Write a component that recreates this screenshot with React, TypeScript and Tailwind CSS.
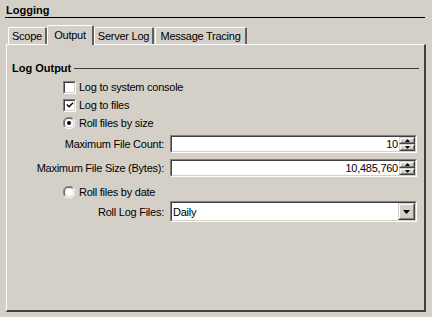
import React from "react";

const Sunken = ({ className, children }: { className?: string; children?: React.ReactNode }) => (
  <div className={`border border-t-[#808080] border-l-[#808080] border-r-white border-b-white ${className ?? ""}`}>
    <div className="flex h-full items-center border border-t-[#404040] border-l-[#404040] border-r-[#d4d0c8] border-b-[#d4d0c8] bg-white">
      {children}
    </div>
  </div>
);

const Raised = ({ className, children }: { className?: string; children?: React.ReactNode }) => (
  <div className={`border border-t-[#d4d0c8] border-l-[#d4d0c8] border-r-[#404040] border-b-[#404040] ${className ?? ""}`}>
    <div className="flex h-full items-center justify-center border border-t-white border-l-white border-r-[#808080] border-b-[#808080] bg-[#d4d0c8]">
      {children}
    </div>
  </div>
);

const Checkbox = ({ checked }: { checked?: boolean }) => (
  <Sunken className="h-[13px] w-[13px]">
    {checked && (
      <svg width="9" height="9" viewBox="0 0 9 9" className="ml-px">
        <path d="M1 3.5 L3.5 6 L8 1.5" stroke="#000" strokeWidth="1.6" fill="none" />
      </svg>
    )}
  </Sunken>
);

const Radio = ({ checked }: { checked?: boolean }) => (
  <svg width="12" height="12" viewBox="0 0 12 12">
    <circle cx="6" cy="6" r="5.5" fill="white" />
    <path d="M1.8 10.2 A5.5 5.5 0 0 1 10.2 1.8" stroke="#808080" strokeWidth="1" fill="none" />
    <path d="M2.6 9.4 A4.5 4.5 0 0 1 9.4 2.6" stroke="#404040" strokeWidth="1" fill="none" />
    <path d="M10.2 1.8 A5.5 5.5 0 0 1 1.8 10.2" stroke="#ffffff" strokeWidth="1" fill="none" />
    <path d="M9.4 2.6 A4.5 4.5 0 0 1 2.6 9.4" stroke="#d4d0c8" strokeWidth="1" fill="none" />
    {checked && <circle cx="6" cy="6" r="2" fill="#000" />}
  </svg>
);

const Spinner = () => (
  <div className="flex h-full w-[16px] flex-col">
    <Raised className="h-1/2">
      <svg width="5" height="3" viewBox="0 0 5 3">
        <path d="M2.5 0 L5 3 L0 3 Z" fill="#000" />
      </svg>
    </Raised>
    <Raised className="h-1/2">
      <svg width="5" height="3" viewBox="0 0 5 3">
        <path d="M0 0 L5 0 L2.5 3 Z" fill="#000" />
      </svg>
    </Raised>
  </div>
);

const Tab = ({ label, width, selected }: { label: string; width: string; selected?: boolean }) => (
  <div
    className={`${width} ${
      selected ? "relative z-10 -mb-px h-[20px] pt-[2px]" : "h-[17px] pt-[1px]"
    } flex justify-center rounded-tl-[2px] rounded-tr-[2px] border-t border-l border-r-2 border-t-white border-l-white border-r-[#606060] bg-[#d4d0c8]`}
  >
    <span className="leading-[14px]">{label}</span>
  </div>
);

const NumberField = ({ value }: { value: string }) => (
  <Sunken className="h-[18px] w-[247px]">
    <span className="flex-1 pr-px text-right leading-[14px]">{value}</span>
    <Spinner />
  </Sunken>
);

const FieldRow = ({ label, children }: { label: string; children: React.ReactNode }) => (
  <div className="flex items-center">
    <span className="w-[157px] text-right">{label}</span>
    <div className="ml-[6px]">{children}</div>
  </div>
);

export default function App() {
  return (
    <div className="h-[317px] w-[432px] overflow-hidden bg-[#d4d0c8] text-[11px] leading-[14px] tracking-[-0.25px] text-black [font-family:'Liberation_Sans',Arial,sans-serif]">
      {/* title */}
      <div className="mr-[7px] ml-[5px] border-b border-black pt-[3px] pl-px font-bold tracking-normal">Logging</div>

      {/* tabs */}
      <div className="mt-[7px] ml-[8px] flex items-end">
        <Tab label="Scope" width="w-[39px]" />
        <Tab label="Output" width="w-[47px]" selected />
        <Tab label="Server Log" width="w-[60px]" />
        <div className="w-px" />
        <Tab label="Message Tracing" width="w-[92px]" />
      </div>

      {/* panel */}
      <div className="ml-[6px] h-[268px] w-[420px] border-t border-l border-r-2 border-b-2 border-t-white border-l-white border-r-[#404040] border-b-[#404040]">
        <div className="flex items-center pt-[16px] pr-[5px] pl-[5px]">
          <span className="font-bold tracking-normal">Log Output</span>
          <div className="ml-[3px] h-px flex-1 bg-[#404040]" />
        </div>

        <div className="mt-[3px] pl-[56px]">
          <div className="flex h-[18px] items-center gap-[3px]">
            <Checkbox />
            <span>Log to system console</span>
          </div>
          <div className="flex h-[18px] items-center gap-[3px]">
            <Checkbox checked />
            <span>Log to files</span>
          </div>
          <div className="flex h-[18px] items-center gap-[4px]">
            <Radio checked />
            <span>Roll files by size</span>
          </div>
        </div>

        <div className="mt-[3px] flex flex-col gap-[6px]">
          <FieldRow label="Maximum File Count:">
            <NumberField value="10" />
          </FieldRow>
          <FieldRow label="Maximum File Size (Bytes):">
            <NumberField value="10,485,760" />
          </FieldRow>
        </div>

        <div className="mt-[6px] flex h-[18px] items-center gap-[4px] pl-[56px]">
          <Radio />
          <span>Roll files by date</span>
        </div>

        <div>
          <FieldRow label="Roll Log Files:">
            <Sunken className="h-[21px] w-[247px]">
              <span className="flex-1 pl-px">Daily</span>
              <Raised className="h-full w-[17px]">
                <svg width="7" height="4" viewBox="0 0 7 4">
                  <path d="M0 0 L7 0 L3.5 4 Z" fill="#000" />
                </svg>
              </Raised>
            </Sunken>
          </FieldRow>
        </div>
      </div>
    </div>
  );
}
